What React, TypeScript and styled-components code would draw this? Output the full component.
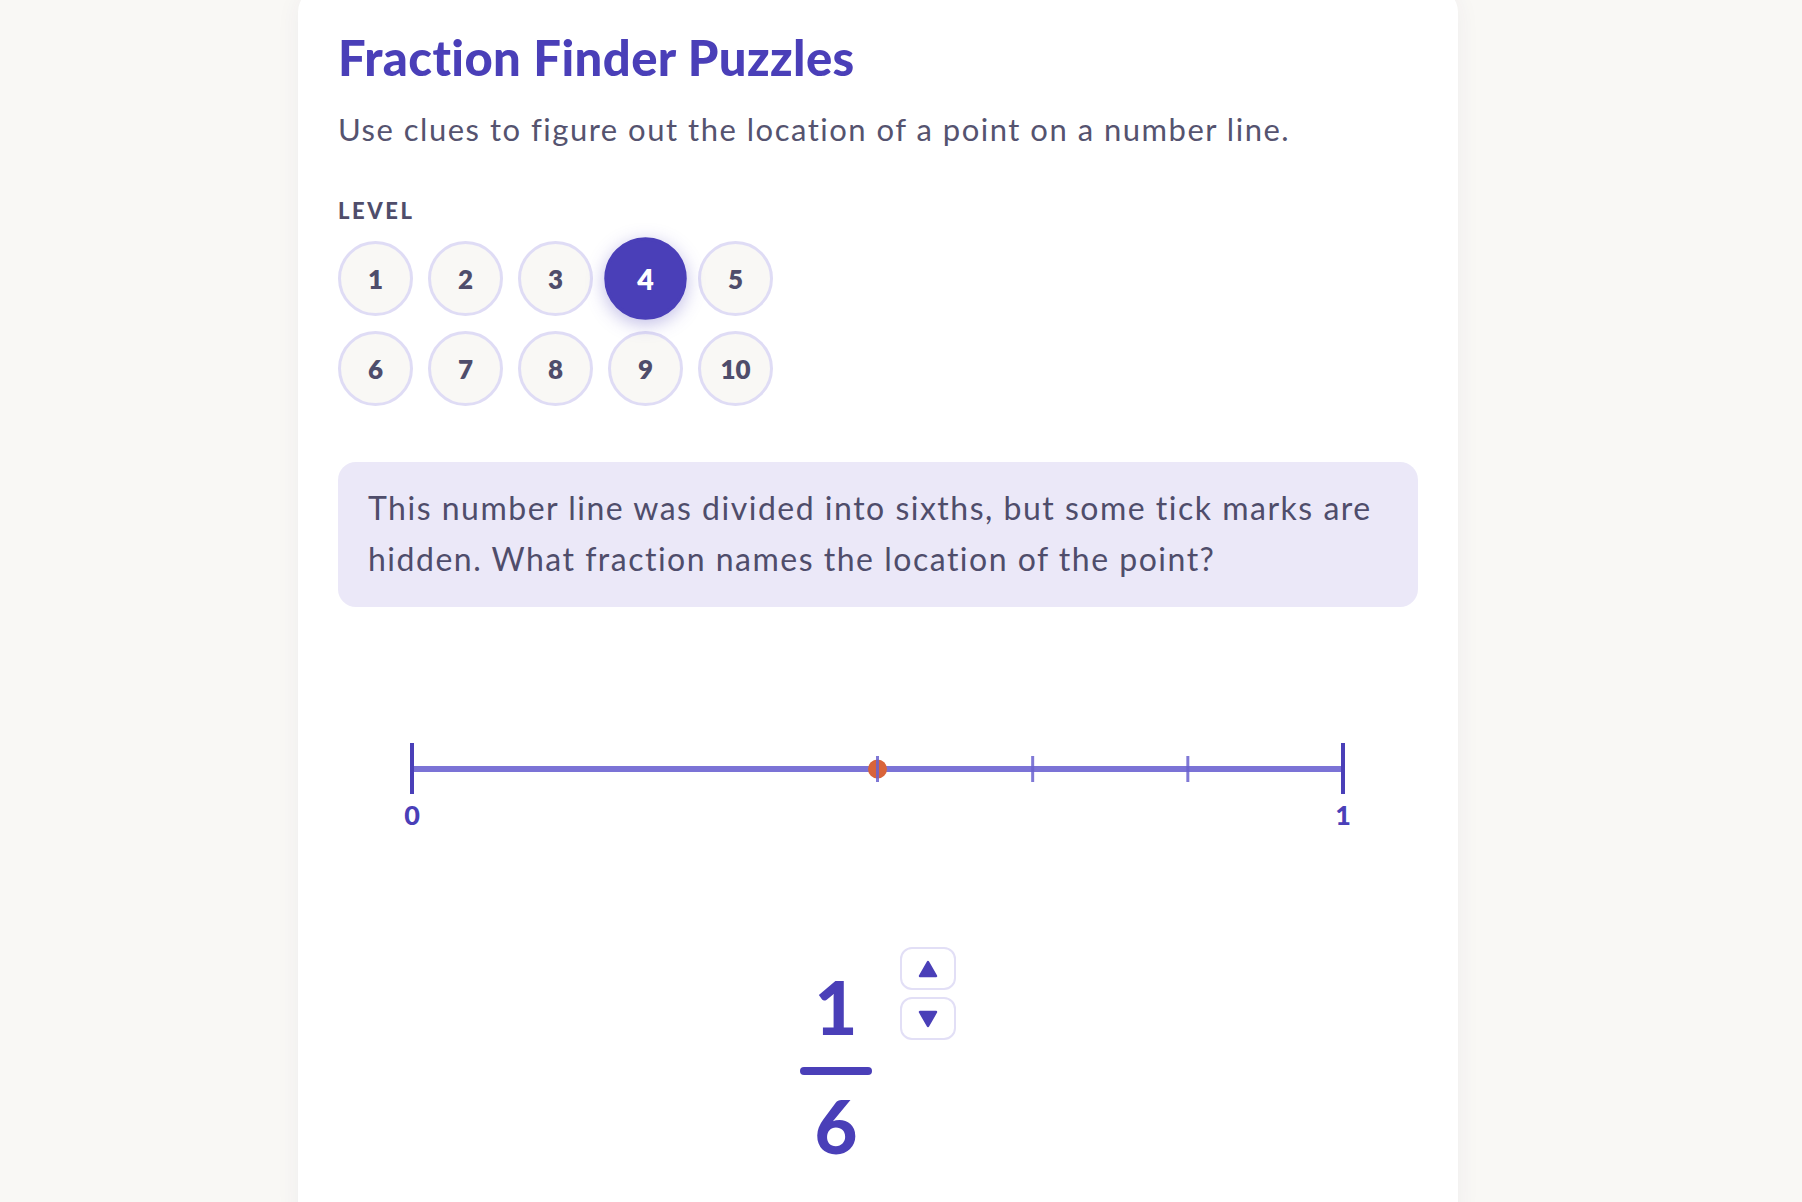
import { useState } from 'react'
import styled, { createGlobalStyle } from 'styled-components'

const GlobalStyle = createGlobalStyle`
  html, body {
    margin: 0;
    padding: 0;
    background: #f9f8f5;
    overflow: hidden;
  }
  * {
    box-sizing: border-box;
  }
`

const Page = styled.div`
  min-height: 1202px;
  padding-left: 298px;
  font-family: 'Lato', 'Open Sans', sans-serif;
`

const Card = styled.div`
  width: 1160px;
  min-height: 1240px;
  margin-top: -12px;
  padding: 40px 40px 60px 40px;
  background: #ffffff;
  border-radius: 24px;
  box-shadow: 0 4px 24px rgba(60, 50, 120, 0.06);
`

const Title = styled.h1`
  margin: 0;
  font-size: 49px;
  line-height: 58px;
  font-weight: 900;
  letter-spacing: 0.4px;
  color: #4a3fb8;
`

const Subtitle = styled.p`
  margin: 23px 0 0 0;
  font-size: 31px;
  line-height: 40px;
  letter-spacing: 1.5px;
  color: #55536f;
`

const Label = styled.div`
  margin-top: 50px;
  font-size: 22px;
  line-height: 24px;
  font-weight: 900;
  letter-spacing: 2.6px;
  color: #4f4d6b;
`

const LevelGrid = styled.div`
  margin-top: 18px;
  display: grid;
  grid-template-columns: repeat(5, 75px);
  gap: 15px;
`

const LevelButton = styled.button<{ $active?: boolean }>`
  width: 75px;
  height: 75px;
  border-radius: 50%;
  border: 3px solid ${p => (p.$active ? '#4a3fb8' : '#dfdcf5')};
  background: ${p => (p.$active ? '#4a3fb8' : '#f9f8f5')};
  color: ${p => (p.$active ? '#ffffff' : '#4f4d6b')};
  font-family: inherit;
  font-size: 26px;
  font-weight: 800;
  cursor: pointer;
  display: flex;
  align-items: center;
  justify-content: center;
  transform: ${p => (p.$active ? 'scale(1.1)' : 'none')};
  box-shadow: ${p => (p.$active ? '0 4px 16px rgba(74, 63, 184, 0.35)' : 'none')};
`

const Question = styled.div`
  margin-top: 56px;
  padding: 20px 30px 23px 30px;
  background: #ebe8f8;
  border-radius: 18px;
  font-size: 32px;
  line-height: 51px;
  letter-spacing: 1.5px;
  color: #4f4d6b;
`

const LineWrap = styled.div`
  margin-top: 102px;
  display: flex;
`

const Answer = styled.div`
  margin-top: 98px;
  display: flex;
  justify-content: center;
  align-items: flex-start;
  gap: 28px;
`

const Fraction = styled.div`
  margin-top: 24px;
  width: 72px;
  display: flex;
  flex-direction: column;
  align-items: center;
`

const Digit = styled.div`
  font-size: 74px;
  line-height: 72px;
  font-weight: 900;
  color: #4a3fb8;
`

const Bar = styled.div`
  width: 72px;
  height: 8px;
  margin: 24px 0 15px 0;
  border-radius: 4px;
  background: #4a3fb8;
`

const Stepper = styled.div`
  display: flex;
  flex-direction: column;
  gap: 7px;
`

const StepButton = styled.button`
  width: 56px;
  height: 43px;
  border: 2px solid #e2dff6;
  border-radius: 12px;
  background: #ffffff;
  display: flex;
  align-items: center;
  justify-content: center;
  cursor: pointer;
  padding: 0;
`

const Triangle = ({ down }: { down?: boolean }) => (
  <svg width="22" height="22" viewBox="0 0 22 22">
    <polygon
      points={down ? '3,4 19,4 11,18' : '11,4 19,18 3,18'}
      fill="#4a3fb8"
      stroke="#4a3fb8"
      strokeWidth="2.5"
      strokeLinejoin="round"
    />
  </svg>
)

const NumberLine = () => {
  const x0 = 74
  const x1 = 1005
  const at = (n: number) => x0 + ((x1 - x0) * n) / 6
  return (
    <svg width="1080" height="140" viewBox="0 0 1080 140">
      <line x1={x0} y1={60} x2={x1} y2={60} stroke="#7b73d6" strokeWidth={6} />
      <circle cx={at(3)} cy={60} r={9.5} fill="#d9643a" />
      {[3, 4, 5].map(n => (
        <line key={n} x1={at(n)} y1={47} x2={at(n)} y2={73} stroke="#6a61cf" strokeOpacity={0.85} strokeWidth={3} />
      ))}
      <line x1={x0} y1={34} x2={x0} y2={85} stroke="#4a3fb8" strokeWidth={4} />
      <line x1={x1} y1={34} x2={x1} y2={85} stroke="#4a3fb8" strokeWidth={4} />
      <text x={x0} y={116} textAnchor="middle" fontFamily="Lato, sans-serif" fontWeight={900} fontSize={27} fill="#4a3fb8">0</text>
      <text x={x1} y={116} textAnchor="middle" fontFamily="Lato, sans-serif" fontWeight={900} fontSize={27} fill="#4a3fb8">1</text>
    </svg>
  )
}

const App = () => {
  const [level, setLevel] = useState(4)
  const [num, setNum] = useState(1)

  return (
    <>
      <GlobalStyle />
      <Page>
        <Card>
          <Title>Fraction Finder Puzzles</Title>
          <Subtitle>Use clues to figure out the location of a point on a number line.</Subtitle>
          <Label>LEVEL</Label>
          <LevelGrid>
            {[1, 2, 3, 4, 5, 6, 7, 8, 9, 10].map(n => (
              <LevelButton key={n} $active={n === level} onClick={() => setLevel(n)}>
                {n}
              </LevelButton>
            ))}
          </LevelGrid>
          <Question>
            This number line was divided into sixths, but some tick marks are hidden. What fraction names the location of the point?
          </Question>
          <LineWrap>
            <NumberLine />
          </LineWrap>
          <Answer>
            <Fraction>
              <Digit>{num}</Digit>
              <Bar />
              <Digit>6</Digit>
            </Fraction>
            <Stepper>
              <StepButton onClick={() => setNum(num + 1)}>
                <Triangle />
              </StepButton>
              <StepButton onClick={() => setNum(Math.max(0, num - 1))}>
                <Triangle down />
              </StepButton>
            </Stepper>
          </Answer>
        </Card>
      </Page>
    </>
  )
}

export default App
